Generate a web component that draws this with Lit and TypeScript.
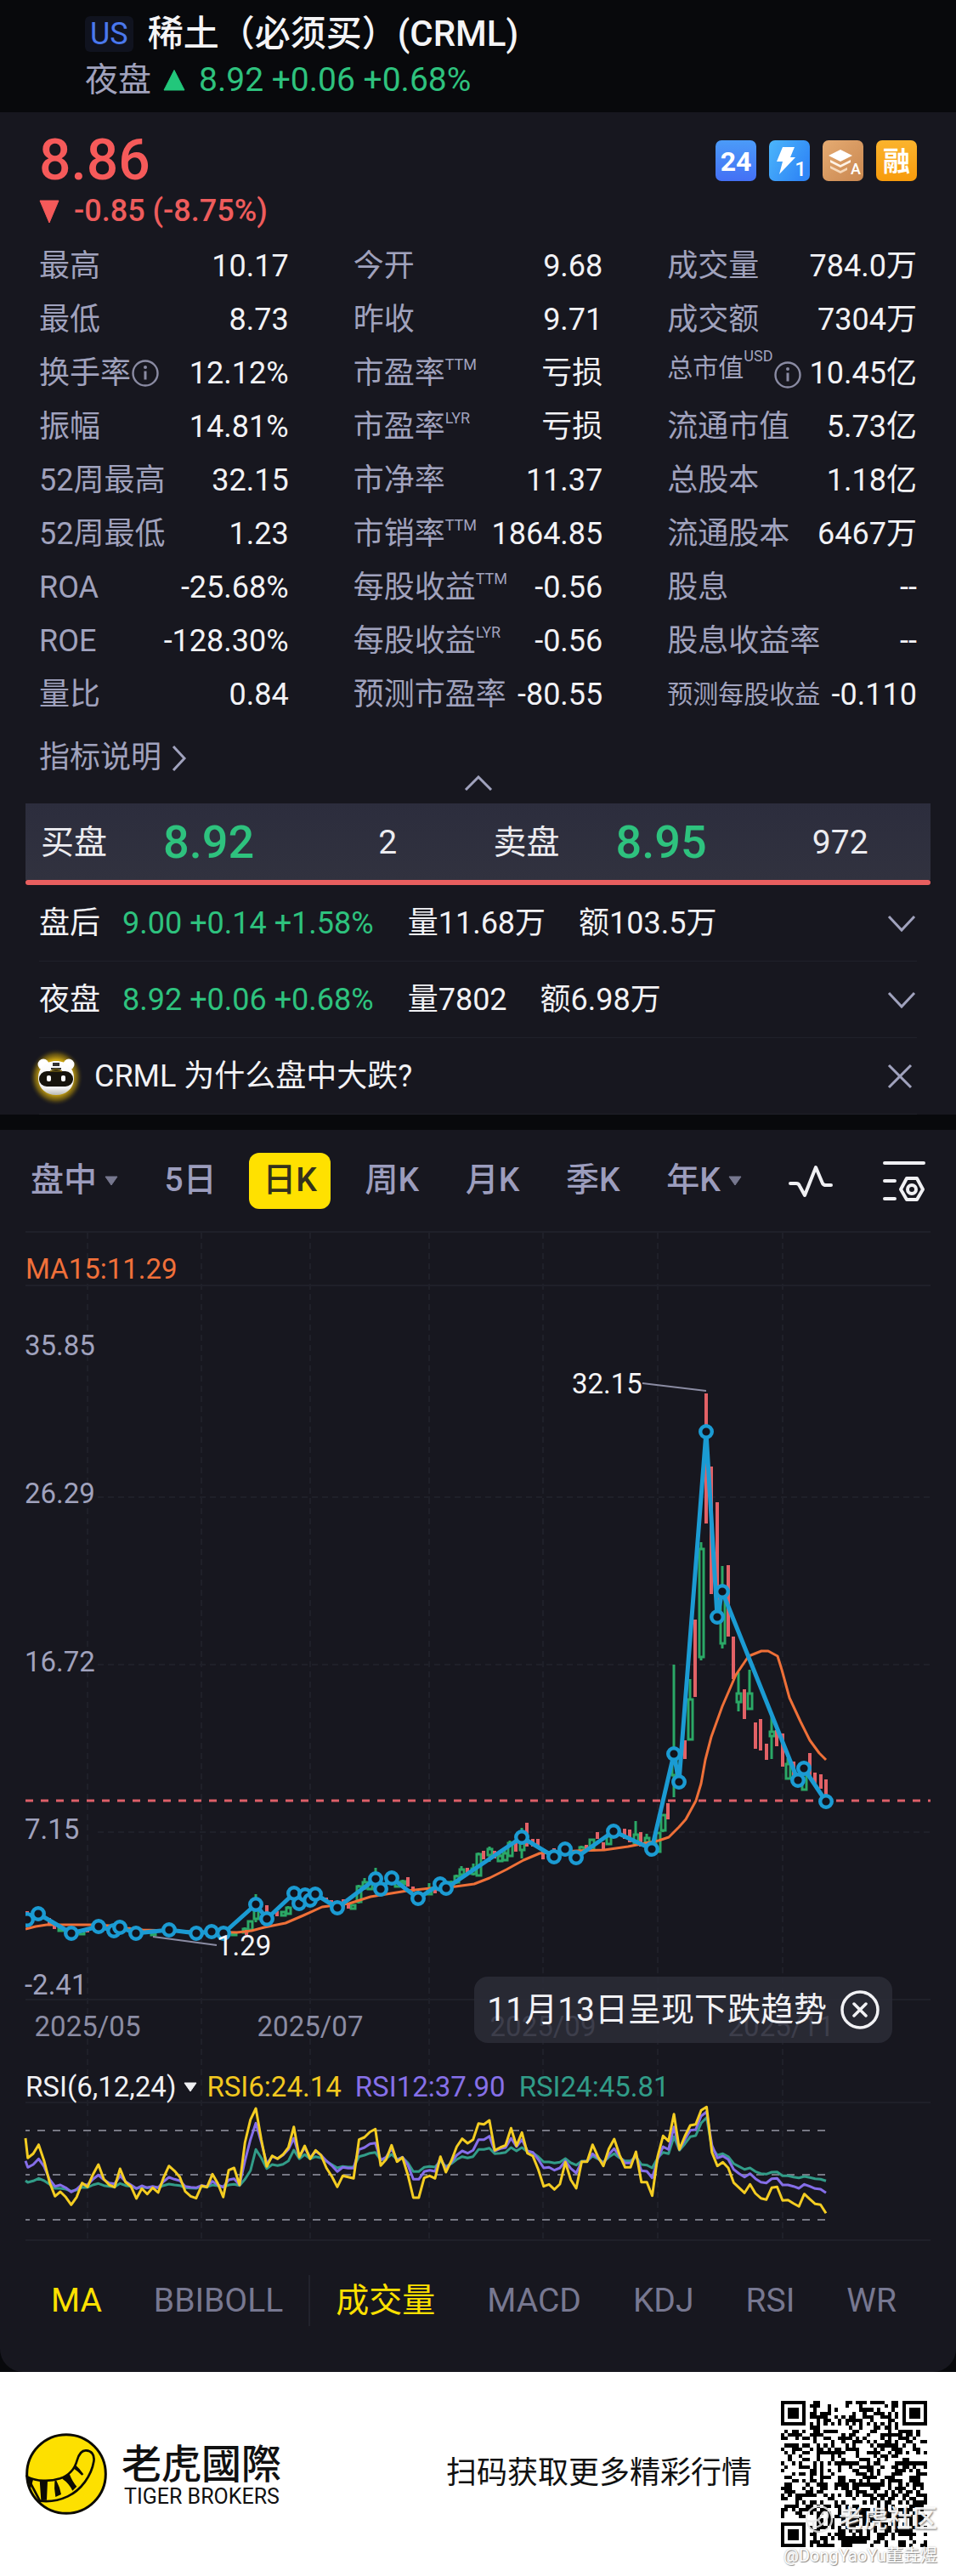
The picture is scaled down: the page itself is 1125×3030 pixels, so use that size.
import { LitElement, html, svg, css, nothing } from "lit";
import { customElement } from "lit/decorators.js";
import { classMap } from "lit/directives/class-map.js";

interface Stat {
  label: string;
  value: string;
  sup?: string;
  info?: boolean;
  small?: boolean;
}

const STATS: Stat[][] = [
  [
    { label: "最高", value: "10.17" },
    { label: "最低", value: "8.73" },
    { label: "换手率", value: "12.12%", info: true },
    { label: "振幅", value: "14.81%" },
    { label: "52周最高", value: "32.15" },
    { label: "52周最低", value: "1.23" },
    { label: "ROA", value: "-25.68%" },
    { label: "ROE", value: "-128.30%" },
    { label: "量比", value: "0.84" },
  ],
  [
    { label: "今开", value: "9.68" },
    { label: "昨收", value: "9.71" },
    { label: "市盈率", sup: "TTM", value: "亏损" },
    { label: "市盈率", sup: "LYR", value: "亏损" },
    { label: "市净率", value: "11.37" },
    { label: "市销率", sup: "TTM", value: "1864.85" },
    { label: "每股收益", sup: "TTM", value: "-0.56" },
    { label: "每股收益", sup: "LYR", value: "-0.56" },
    { label: "预测市盈率", value: "-80.55" },
  ],
  [
    { label: "成交量", value: "784.0万" },
    { label: "成交额", value: "7304万" },
    { label: "总市值", sup: "USD", value: "10.45亿", info: true, small: true },
    { label: "流通市值", value: "5.73亿" },
    { label: "总股本", value: "1.18亿" },
    { label: "流通股本", value: "6467万" },
    { label: "股息", value: "--" },
    { label: "股息收益率", value: "--" },
    { label: "预测每股收益", value: "-0.110", small: true },
  ],
];

const SESSIONS = [
  { name: "盘后", quote: "9.00 +0.14 +1.58%", volume: "量11.68万", amount: "额103.5万" },
  { name: "夜盘", quote: "8.92 +0.06 +0.68%", volume: "量7802", amount: "额6.98万" },
];

const PERIODS = [
  { label: "盘中", menu: true },
  { label: "5日" },
  { label: "日K", active: true },
  { label: "周K" },
  { label: "月K" },
  { label: "季K" },
  { label: "年K", menu: true },
];

type Point = [number, number];

const GRID_X = [103, 237, 365, 505, 639, 774, 921];
const GRID_Y = [1761, 1958, 2155];

const MA15: Point[] = [
  [30, 2269], [42, 2266], [55, 2264], [107, 2264], [130, 2265], [150, 2268], [168, 2270], [200, 2271], [229, 2272],
  [279, 2273], [296, 2271], [311, 2267], [336, 2262], [357, 2253], [379, 2243], [411, 2239], [436, 2231],
  [479, 2224], [507, 2221], [536, 2219], [558, 2216], [576, 2209], [596, 2199], [616, 2188], [635, 2180],
  [659, 2178], [679, 2177], [711, 2176], [739, 2172], [775, 2165], [787, 2161], [799, 2149], [807, 2140],
  [819, 2118], [825, 2098], [830, 2070], [837, 2043], [850, 2007], [866, 1970], [881, 1948], [896, 1942],
  [904, 1942], [915, 1948], [920, 1964], [929, 1997], [942, 2025], [953, 2047], [964, 2062], [972, 2070],
];

const TREND: Point[] = [
  [32, 2258], [45, 2251], [84, 2274], [116, 2266], [134, 2271], [141, 2267], [160, 2274], [199, 2270],
  [231, 2274], [249, 2272], [263, 2274], [301, 2240], [314, 2257], [346, 2227], [352, 2239], [359, 2229],
  [365, 2235], [371, 2228], [397, 2244], [442, 2210], [448, 2222], [461, 2209], [492, 2233], [518, 2216],
  [525, 2221], [614, 2161], [652, 2184], [665, 2175], [678, 2185], [722, 2154], [767, 2175], [793, 2063],
  [799, 2096], [831, 1684], [844, 1902], [850, 1872], [939, 2094], [946, 2080], [972, 2119],
];

/* x, high, low */
const FALLS: [number, number, number][] = [
  [32, 2248, 2262], [58, 2256, 2264], [64, 2263, 2269], [103, 2268, 2273], [290, 2270, 2276], [314, 2241, 2252],
  [326, 2248, 2254], [384, 2232, 2238], [390, 2235, 2240], [404, 2234, 2243], [410, 2240, 2245], [480, 2208, 2219],
  [486, 2219, 2225], [512, 2221, 2227], [550, 2197, 2203], [569, 2177, 2187], [582, 2177, 2186],
  [607, 2168, 2178], [620, 2144, 2172], [627, 2163, 2172], [633, 2163, 2173], [639, 2176, 2187],
  [652, 2174, 2180], [690, 2170, 2178], [703, 2155, 2163], [710, 2167, 2175], [735, 2151, 2163],
  [741, 2152, 2167], [754, 2155, 2172], [786, 2121, 2140], [806, 2047, 2069], [818, 1905, 1996],
  [831, 1639, 1792], [837, 1725, 1875], [844, 1767, 1892], [857, 1841, 1925], [863, 1925, 1975],
  [876, 1987, 2022], [889, 2026, 2057], [895, 2022, 2059], [902, 2051, 2070], [914, 2035, 2054],
  [921, 2039, 2078], [934, 2072, 2090], [953, 2062, 2090], [959, 2085, 2098], [966, 2087, 2104],
  [972, 2093, 2112],
];

/* x, high, body top, body bottom, low */
const RISES: [number, number, number, number, number][] = [
  [71, 2267, 2268, 2271, 2272], [96, 2270, 2271, 2275, 2275], [180, 2272, 2274, 2276, 2277],
  [275, 2273, 2274, 2276, 2277], [288, 2267, 2269, 2273, 2274], [294, 2259, 2260, 2270, 2271],
  [301, 2228, 2246, 2257, 2261], [333, 2248, 2249, 2253, 2254], [339, 2242, 2244, 2251, 2252],
  [415, 2240, 2241, 2245, 2246], [422, 2217, 2219, 2237, 2239], [429, 2209, 2214, 2221, 2223],
  [435, 2212, 2215, 2222, 2222], [442, 2197, 2204, 2212, 2214], [467, 2212, 2214, 2219, 2220],
  [474, 2211, 2213, 2216, 2217], [505, 2215, 2222, 2228, 2229], [531, 2212, 2214, 2219, 2220],
  [537, 2205, 2207, 2214, 2216], [543, 2195, 2199, 2205, 2208], [557, 2192, 2198, 2204, 2206],
  [563, 2179, 2181, 2206, 2207], [576, 2172, 2175, 2182, 2190], [588, 2180, 2183, 2189, 2190],
  [594, 2176, 2180, 2188, 2189], [600, 2165, 2168, 2183, 2184], [614, 2150, 2168, 2176, 2186],
  [684, 2171, 2173, 2177, 2178], [696, 2163, 2164, 2176, 2177], [716, 2158, 2160, 2169, 2170],
  [748, 2142, 2158, 2168, 2170], [761, 2157, 2162, 2167, 2168], [774, 2155, 2156, 2178, 2179],
  [780, 2134, 2135, 2153, 2155], [793, 1958, 2063, 2088, 2114], [812, 1975, 1999, 2046, 2047],
  [825, 1814, 1822, 1949, 1953], [850, 1842, 1872, 1933, 1939], [869, 1967, 1992, 2002, 2013],
  [882, 1964, 1992, 2010, 2011], [908, 2015, 2037, 2042, 2069], [927, 2068, 2075, 2092, 2093],
  [946, 2084, 2087, 2105, 2106],
];

/* One sample per trading day, in thirds of a unit below the oscillator's top. */
const RSI6 = [
  355, 340, 308, 365, 440, 490, 474, 493, 520, 493, 443, 457, 413, 378, 430, 450, 458, 393, 440, 455, 498, 463, 482,
  460, 477, 425, 383, 400, 422, 473, 490, 497, 453, 458, 412, 445, 493, 398, 390, 450, 300, 220, 180, 290, 385, 347,
  358, 343, 318, 245, 352, 312, 358, 328, 345, 390, 420, 457, 418, 422, 427, 290, 282, 263, 253, 382, 360, 310, 368,
  353, 415, 495, 495, 425, 418, 427, 350, 405, 365, 315, 287, 303, 290, 233, 236, 222, 328, 318, 310, 250, 312, 265,
  338, 348, 395, 455, 448, 466, 447, 370, 432, 462, 368, 368, 308, 350, 383, 323, 288, 345, 388, 388, 333, 440, 440,
  488, 350, 277, 295, 200, 325, 278, 240, 236, 187, 175, 335, 383, 370, 390, 442, 460, 478, 448, 480, 497, 502, 460,
  457, 505, 503, 515, 526, 482, 500, 517, 520, 550,
];
const RSI12 = [
  388, 378, 358, 385, 430, 455, 450, 460, 475, 465, 447, 450, 430, 415, 432, 443, 446, 418, 438, 450, 463, 453, 460,
  455, 460, 438, 423, 430, 435, 455, 458, 460, 452, 455, 437, 450, 458, 432, 428, 450, 365, 290, 232, 300, 375, 350,
  357, 345, 325, 285, 350, 318, 355, 330, 345, 365, 382, 403, 388, 391, 391, 325, 318, 305, 302, 362, 352, 322, 362,
  352, 380, 430, 430, 403, 398, 402, 355, 393, 370, 345, 330, 338, 328, 290, 290, 278, 330, 322, 318, 285, 315, 290,
  330, 335, 360, 390, 388, 398, 390, 365, 392, 408, 368, 366, 340, 355, 375, 343, 322, 350, 373, 373, 345, 400, 402,
  425, 360, 315, 325, 245, 325, 290, 257, 255, 207, 192, 310, 355, 348, 360, 395, 410, 422, 410, 428, 440, 443, 428,
  427, 450, 450, 455, 462, 448, 455, 463, 465, 478,
];
const RSI24 = [
  441, 436, 427, 435, 448, 462, 462, 465, 472, 468, 458, 459, 450, 445, 452, 455, 457, 445, 452, 455, 462, 458, 460,
  458, 460, 452, 447, 450, 452, 460, 461, 462, 455, 457, 450, 453, 457, 450, 448, 452, 430, 400, 325, 355, 392, 378,
  382, 377, 365, 327, 358, 343, 358, 350, 355, 367, 378, 390, 385, 387, 387, 350, 345, 338, 335, 362, 357, 342, 360,
  353, 372, 403, 403, 388, 385, 387, 365, 385, 375, 360, 350, 355, 350, 325, 325, 320, 340, 338, 335, 318, 330, 318,
  332, 337, 350, 369, 369, 373, 370, 357, 372, 380, 366, 366, 348, 358, 370, 352, 340, 355, 365, 365, 350, 378, 380,
  390, 355, 335, 340, 280, 328, 305, 280, 276, 232, 212, 320, 345, 340, 350, 375, 385, 395, 390, 403, 410, 412, 405,
  404, 418, 418, 422, 425, 420, 424, 428, 430, 436,
];

const poly = (pts: Point[]) => pts.map((p) => p.join(",")).join(" ");
const oscillator = (lead: number, samples: number[]) =>
  poly([
    [30, 2420 + lead / 3],
    ...samples.map((s, i): Point => [+(32.7 + 6.39 * i).toFixed(1), +(2420 + s / 3).toFixed(1)]),
  ]);

/* Dark modules of a 41 x 41 code as one path. */
function codePath(): string {
  const n = 41;
  const ring = (r: number, c: number, top: number, left: number, size: number) => {
    const y = r - top;
    const x = c - left;
    if (y < 0 || x < 0 || y >= size || x >= size) return undefined;
    const d = Math.min(y, x, size - 1 - y, size - 1 - x);
    return d !== 1;
  };
  let seed = 20251113;
  let d = "";
  for (let r = 0; r < n; r++) {
    for (let c = 0; c < n; c++) {
      seed = (Math.imul(seed, 1664525) + 1013904223) >>> 0;
      let dark = ((seed >>> 16) & 255) < 128;
      if ((r < 8 && (c < 8 || c > n - 9)) || (r > n - 9 && c < 8)) dark = false;
      else if (r === 6 || c === 6) dark = (r + c) % 2 === 0;
      dark =
        ring(r, c, 0, 0, 7) ?? ring(r, c, 0, n - 7, 7) ?? ring(r, c, n - 7, 0, 7) ?? ring(r, c, 32, 32, 5) ?? dark;
      if (dark) d += `M${c} ${r}h1v1h-1z`;
    }
  }
  return d;
}

const infoIcon = svg`<circle cx="17" cy="17" r="14.5" fill="none" stroke="#8a8ba3" stroke-width="2.4"/>
  <path d="M17 14.5v10" stroke="#8a8ba3" stroke-width="3"/><circle cx="17" cy="10" r="2" fill="#8a8ba3"/>`;

@customElement("quote-header")
export class QuoteHeader extends LitElement {
  static styles = css`
    :host { display: block; background: #08090c; padding: 16px 46px 8px 100px; }
    .row { display: flex; align-items: center; height: 48px; }
    .row + .row { height: 60px; }
    .market { background: #10131f; color: #4a78ee; font-size: 36px; line-height: 42px; padding: 0 6px; border-radius: 6px; }
    .name { margin: 0 0 0 17px; font-size: 42px; line-height: 48px; font-weight: 500; color: #f4f4f6; white-space: nowrap; }
    .session { font-size: 39px; color: #a0a2bd; }
    .up { width: 26px; height: 26px; margin: 0 16px 0 14px; }
    .quote { font-size: 39px; color: #2ec27e; }
  `;
  render() {
    return html`
      <div class="row">
        <span class="market">US</span>
        <h1 class="name">稀土（必须买）(CRML)</h1>
      </div>
      <div class="row">
        <span class="session">夜盘</span>
        <svg class="up" viewBox="0 0 26 26"><path d="M13 1.5 25 25H1z" fill="#22c77b" stroke="#22c77b" stroke-linejoin="round"/></svg>
        <span class="quote">8.92 +0.06 +0.68%</span>
      </div>
    `;
  }
}

@customElement("quote-stats")
export class QuoteStats extends LitElement {
  static styles = css`
    :host { display: block; padding: 24px 46px 15px; }
    .top { display: flex; align-items: center; justify-content: space-between; height: 66px; }
    .price { font-size: 66px; line-height: 66px; font-weight: 500; color: #f65a5a; }
    .badges { display: flex; gap: 15px; }
    .badge { width: 48px; height: 48px; display: block; }
    .change { display: flex; align-items: center; gap: 17px; height: 54px; font-size: 36px; font-weight: 500; color: #ee5c5c; }
    .down { width: 24px; height: 28px; }
    .grid { display: grid; grid-template-columns: repeat(3, 1fr); column-gap: 76px; margin-top: 5px; }
    .list { margin: 0; }
    .stat { display: flex; align-items: center; justify-content: space-between; height: 63px; font-size: 36px; line-height: 42px; white-space: nowrap; }
    .label { display: flex; align-items: center; color: #a0a2bd; }
    .small { font-size: 30px; }
    .sup { align-self: flex-start; font-size: 18px; line-height: 22px; }
    .small .sup { margin-top: -4px; }
    .raised { padding-bottom: 12px; }
    .info { width: 34px; height: 34px; }
    .raised .info { margin: 8px 3px -8px 0; }
    .value { margin: 0; color: #f2f2f5; }
    .explain { display: inline-flex; align-items: center; gap: 12px; margin-top: 21px; height: 46px; color: #a0a2bd; font-size: 36px; text-decoration: none; }
    .arrow { width: 18px; height: 32px; }
    .fold { display: block; margin: -3px auto 0; padding: 0; width: 34px; height: 18px; border: 0; background: none; }
    .fold svg { display: block; width: 34px; height: 18px; }
  `;
  private stat(s: Stat) {
    const raised = !!(s.small && s.info);
    return html`<div class="stat">
      <dt class=${classMap({ label: true, small: !!s.small, raised })}>
        ${s.label}${s.sup ? html`<span class="sup">${s.sup}</span>` : nothing}${s.info
          ? html`<svg class="info" viewBox="0 0 34 34">${infoIcon}</svg>`
          : nothing}
      </dt>
      <dd class="value">${s.value}</dd>
    </div>`;
  }
  render() {
    return html`
      <div class="top">
        <span class="price">8.86</span>
        <div class="badges">
          <svg class="badge" viewBox="0 0 48 48" font-family="Roboto, sans-serif">
            <defs><linearGradient id="a" x1="0" y1="0" x2="0" y2="1"><stop stop-color="#4b9bf8"/><stop offset="1" stop-color="#4470f5"/></linearGradient></defs>
            <rect width="48" height="48" rx="7" fill="url(#a)"/>
            <text x="24" y="36" text-anchor="middle" font-size="32" font-weight="700" fill="#fff">24</text>
          </svg>
          <svg class="badge" viewBox="0 0 48 48" font-family="Roboto, sans-serif">
            <defs><linearGradient id="b" x1="0" y1="0" x2="1" y2=".6"><stop stop-color="#4cb6fb"/><stop offset="1" stop-color="#2f86f6"/></linearGradient></defs>
            <rect width="48" height="48" rx="7" fill="url(#b)"/>
            <path d="M16 8h14l-5 12h6L12 40l4-15H9z" fill="#fff"/>
            <text x="37" y="42" text-anchor="middle" font-size="24" font-weight="500" fill="#fff">1</text>
          </svg>
          <svg class="badge" viewBox="0 0 48 48" font-family="Roboto, sans-serif">
            <defs><linearGradient id="c" x1="0" y1="0" x2="1" y2="1"><stop stop-color="#e5ab72"/><stop offset="1" stop-color="#c98750"/></linearGradient></defs>
            <rect width="48" height="48" rx="7" fill="url(#c)"/>
            <path d="M21 11 35 18 21 25 7 18z" fill="#fff"/>
            <path d="M9 23l12 6 12-6v3l-12 6-12-6z" fill="#fff3e6"/>
            <path d="M9 30l12 6 8-4v3l-8 4-12-6z" fill="#f6d9bb"/>
            <text x="39" y="40" text-anchor="middle" font-size="18" font-weight="500" fill="#fff">A</text>
          </svg>
          <svg class="badge" viewBox="0 0 48 48" font-family="'Noto Sans CJK SC', sans-serif">
            <defs><linearGradient id="d" x1="0" y1="0" x2="0" y2="1"><stop stop-color="#fbb32d"/><stop offset="1" stop-color="#f79b0c"/></linearGradient></defs>
            <rect width="48" height="48" rx="7" fill="url(#d)"/>
            <text x="24" y="36" text-anchor="middle" font-size="32" font-weight="700" fill="#fff">融</text>
          </svg>
        </div>
      </div>
      <div class="change">
        <svg class="down" viewBox="0 0 24 28"><path d="M1 1h22L12 27z" fill="#f65a5a" stroke="#f65a5a" stroke-linejoin="round"/></svg>
        <span>-0.85 (-8.75%)</span>
      </div>
      <div class="grid">${STATS.map((col) => html`<dl class="list">${col.map((s) => this.stat(s))}</dl>`)}</div>
      <a class="explain" href="#">指标说明
        <svg class="arrow" viewBox="0 0 18 32" fill="none" stroke="#a0a2bd" stroke-width="3"><path d="M2 2l13 14L2 30"/></svg>
      </a>
      <button class="fold" type="button" aria-label="收起">
        <svg viewBox="0 0 34 18" fill="none" stroke="#a0a2bd" stroke-width="3"><path d="M2 17 17 2l15 15"/></svg>
      </button>
    `;
  }
}

@customElement("order-book")
export class OrderBook extends LitElement {
  static styles = css`
    :host { display: block; padding: 0 30px; }
    .bar { display: grid; grid-template-columns: 1fr 1fr; height: 90px; background: linear-gradient(#2c2d3d, #31323f); }
    .side { display: grid; grid-template-columns: 144px 158px 1fr; align-items: center; padding: 3px 0 0 18px; font-size: 39px; color: #ececf0; }
    .price { font-size: 54px; font-weight: 500; color: #2ec27e; }
    .size { text-align: center; }
    .ratio { height: 6px; border-radius: 3px; background: #e85f5f; }
    .rows { padding: 0 16px; }
    .row { display: flex; align-items: center; box-sizing: border-box; height: 90px; padding-top: 2px; border-bottom: 1px solid #20212a; font-size: 36px; color: #f2f2f5; white-space: nowrap; }
    .quote { margin: 0 40px 0 26px; color: #2ec27e; }
    .amount { margin-left: 39px; }
    .icon { margin-left: auto; padding: 0; border: 0; background: none; width: 36px; height: 36px; }
    .icon svg { display: block; width: 36px; height: 36px; }
    .mascot { width: 64px; height: 68px; margin: 0 13px 0 -12px; }
    .last .icon { margin-right: 2px; }
  `;
  private side(name: string, price: string, size: string) {
    return html`<div class="side"><span>${name}</span><span class="price">${price}</span><span class="size">${size}</span></div>`;
  }
  render() {
    return html`
      <div class="bar">${this.side("买盘", "8.92", "2")}${this.side("卖盘", "8.95", "972")}</div>
      <div class="ratio"></div>
      <div class="rows">
        ${SESSIONS.map(
          (s) => html`<div class="row">
            <span>${s.name}</span><span class="quote">${s.quote}</span><span>${s.volume}</span><span class="amount">${s.amount}</span>
            <button class="icon" type="button" aria-label="展开${s.name}">
              <svg viewBox="0 0 36 36" fill="none" stroke="#a0a2bd" stroke-width="3"><path d="M3 9l15 16L33 9"/></svg>
            </button>
          </div>`,
        )}
        <div class="row last">
          <svg class="mascot" viewBox="0 0 64 68">
            <defs>
              <radialGradient id="g"><stop offset=".6" stop-color="#c9a312"/><stop offset=".8" stop-color="#6b5812" stop-opacity=".85"/><stop offset="1" stop-color="#17171f" stop-opacity="0"/></radialGradient>
              <linearGradient id="w" x1="0" y1="0" x2="0" y2="1"><stop stop-color="#fff"/><stop offset=".8" stop-color="#f1f1f1"/><stop offset="1" stop-color="#b9b9b4"/></linearGradient>
            </defs>
            <ellipse cx="32" cy="34" rx="32" ry="34" fill="url(#g)"/>
            <circle cx="17" cy="19" r="6.5" fill="#fff"/><circle cx="47" cy="19" r="6.5" fill="#fff"/>
            <path d="M32 15c13 0 21 9 21 20 0 12-9 20-21 20s-21-8-21-20c0-11 8-20 21-20z" fill="url(#w)"/>
            <path d="M28 17h8v4h-8zM26 23h12v2H26z" fill="#333"/>
            <rect x="12" y="27" width="40" height="18" rx="9" fill="#17140c"/>
            <path d="M25 27q7-5 14 0z" fill="#17140c" stroke="#8b7312"/>
            <rect x="21" y="32" width="5" height="7" rx="2" fill="#fff"/><rect x="38" y="32" width="5" height="7" rx="2" fill="#fff"/>
          </svg>
          <span>CRML 为什么盘中大跌?</span>
          <button class="icon" type="button" aria-label="关闭">
            <svg viewBox="0 0 36 36" fill="none" stroke="#a0a2bd" stroke-width="3"><path d="M5 4l26 26M31 4 5 30"/></svg>
          </button>
        </div>
      </div>
    `;
  }
}

@customElement("quote-chart")
export class QuoteChart extends LitElement {
  static styles = css`
    :host { display: block; }
    button { font-family: inherit; line-height: inherit; border: 0; background: none; padding: 0; }
    .periods { display: flex; align-items: center; justify-content: space-between; height: 119px; padding: 0 35px 0 36px; }
    .period { display: flex; align-items: center; gap: 9px; height: 66px; font-size: 39px; font-weight: 500; color: #9c9dbd; }
    .period.active { background: #ffe100; color: #33311c; border-radius: 12px; padding: 0 16px; margin: 0 -14px 0 -16px; }
    .caret { width: 16px; height: 12px; }
    .tool svg { display: block; width: 54px; height: 54px; }
    .plot { position: relative; margin: 0; }
    .canvas { display: block; width: 100%; height: auto; }
    .axis { font-size: 33px; fill: #a0a2bd; }
    .date { font-size: 33px; fill: #8b8ca3; text-anchor: middle; }
    .mark { font-size: 33px; fill: #f4f4f6; }
    .ma { font-size: 33px; fill: #f0703a; }
    .grid { stroke: #1f2029; stroke-width: 2; }
    .dashed { stroke-dasharray: 7 5; }
    .up { fill: none; stroke: #2ba866; stroke-width: 3; }
    .fall { stroke: #e26166; stroke-width: 4; }
    .line { fill: none; stroke-linejoin: round; }
    .legend { position: absolute; left: 30px; top: 83%; height: 42px; display: flex; align-items: center; font-size: 33px; white-space: nowrap; }
    .indicator { display: flex; align-items: center; gap: 9px; margin-right: 11px; font-size: 33px; color: #f0f0f3; }
    .r6 { color: #f2c81f; margin-right: 16px; }
    .r12 { color: #8670e8; margin-right: 16px; }
    .r24 { color: #319c88; }
    .toast { position: absolute; right: 75px; bottom: 233px; height: 78px; display: flex; align-items: center; gap: 16px; padding: 0 15px; border-radius: 16px; background: rgba(44, 45, 56, 0.82); font-size: 39px; color: #f2f2f5; white-space: nowrap; }
    .toast svg { display: block; width: 46px; height: 46px; }
    .tabs { display: flex; align-items: center; justify-content: space-between; height: 154px; padding: 0 70px 14px 60px; box-sizing: border-box; }
    .tab { font-size: 39px; color: #777891; }
    .tab.on { color: #ffe100; }
    .rule { width: 2px; height: 60px; margin: 0 -31px; background: #22232d; }
  `;
  private tab(label: string, on = false) {
    return html`<button type="button" class=${classMap({ tab: true, on })}>${label}</button>`;
  }
  render() {
    return html`
      <nav class="periods">
        ${PERIODS.map(
          (p) => html`<button type="button" class=${classMap({ period: true, active: !!p.active })}>
            ${p.label}${p.menu
              ? html`<svg class="caret" viewBox="0 0 16 12"><path d="M1 1h14L8 11z" fill="#77788f" stroke="#77788f" stroke-linejoin="round"/></svg>`
              : nothing}
          </button>`,
        )}
        <button class="tool" type="button" aria-label="趋势">
          <svg viewBox="0 0 54 54" fill="none" stroke="#f0f0f3" stroke-width="4" stroke-linecap="round" stroke-linejoin="round"><path d="M3 30h7q3 0 4 3l6 11 13-33 8 19q1 2 4 2h6"/></svg>
        </button>
        <button class="tool" type="button" aria-label="设置">
          <svg viewBox="0 0 54 54" fill="none" stroke="#f0f0f3" stroke-width="4" stroke-linecap="round" stroke-linejoin="round"><path d="M5 6h46M5 27h12M5 48h12M31 24h12l7 13-7 12H31l-7-12z"/><circle cx="37" cy="37" r="5"/></svg>
        </button>
      </nav>
      <figure class="plot">
        <svg class="canvas" viewBox="0 1448 1125 1188" font-family="Roboto, 'Noto Sans CJK SC', sans-serif">
          <defs><clipPath id="area"><rect x="30" y="1448" width="1065" height="1188"/></clipPath></defs>
          ${[1449, 1512, 2352, 2473, 2635].map((y) => svg`<path class="grid" d="M30 ${y}H1095"/>`)}
          ${GRID_X.map((x) => svg`<path class="grid dashed" d="M${x} 1450V2635"/>`)}
          ${GRID_Y.map((y) => svg`<path class="grid dashed" d="M115 ${y}H1095"/>`)}
          <text class="ma" x="30" y="1504">MA15:11.29</text>
          <text class="axis" x="29" y="1594">35.85</text>
          <text class="axis" x="29" y="1768">26.29</text>
          <text class="axis" x="29" y="1966">16.72</text>
          <text class="axis" x="29" y="2163">7.15</text>
          <text class="axis" x="29" y="2346">-2.41</text>
          <text class="date" x="103" y="2395">2025/05</text>
          <text class="date" x="365" y="2395">2025/07</text>
          <text class="date" x="639" y="2395">2025/09</text>
          <text class="date" x="919" y="2395">2025/11</text>
          <path d="M30 2118H1095" stroke="#dd5f68" stroke-width="3" stroke-dasharray="9 9"/>
          <g clip-path="url(#area)">
            ${RISES.map(
              ([x, high, top, bottom, low]) =>
                svg`<path class="up" d="M${x} ${high}V${top}M${x} ${bottom}V${low}M${x - 2} ${top}h5V${bottom}h-5z"/>`,
            )}
            ${FALLS.map(([x, high, low]) => svg`<path class="fall" d="M${x} ${high}V${low}"/>`)}
            <polyline class="line" stroke="#ef7038" stroke-width="3" points=${poly(MA15)}/>
            <polyline class="line" stroke="#1b9bd3" stroke-width="5" points=${poly(TREND)}/>
            <g fill="#12131c" stroke="#1b9bd3" stroke-width="4.4">
              ${TREND.map(([x, y]) => svg`<circle cx=${x} cy=${y} r="6.8"/>`)}
            </g>
          </g>
          <path d="M756 1627 831 1636M180 2278l75 10" stroke="#8b8ca3" stroke-width="2" fill="none"/>
          <text class="mark" x="673" y="1639">32.15</text>
          <text class="mark" x="255" y="2300">1.29</text>
          ${[2506, 2558, 2611].map(
            (y) => svg`<path d="M30 ${y}H972" stroke="#777884" stroke-width="2" stroke-dasharray="9 9" stroke-dashoffset="4"/>`,
          )}
          <polyline class="line" stroke="#329c88" stroke-width="3" points=${oscillator(435, RSI24)}/>
          <polyline class="line" stroke="#856ee9" stroke-width="3" points=${oscillator(365, RSI12)}/>
          <polyline class="line" stroke="#f4cd22" stroke-width="3" points=${oscillator(285, RSI6)}/>
        </svg>
        <div class="legend">
          <button class="indicator" type="button">RSI(6,12,24)
            <svg class="caret" viewBox="0 0 16 12"><path d="M1 1h14L8 11z" fill="#f0f0f3" stroke="#f0f0f3" stroke-linejoin="round"/></svg>
          </button>
          <span class="r6">RSI6:24.14</span><span class="r12">RSI12:37.90</span><span class="r24">RSI24:45.81</span>
        </div>
        <div class="toast">
          <span>11月13日呈现下跌趋势</span>
          <button type="button" aria-label="关闭">
            <svg viewBox="0 0 46 46" fill="none" stroke="#f2f2f5" stroke-width="3.5" stroke-linecap="round"><circle cx="23" cy="23" r="21"/><path d="M16 16l14 14M30 16 16 30"/></svg>
          </button>
        </div>
      </figure>
      <nav class="tabs">
        ${this.tab("MA", true)}${this.tab("BBIBOLL")}<span class="rule"></span>${this.tab("成交量", true)}
        ${["MACD", "KDJ", "RSI", "WR"].map((t) => this.tab(t))}
      </nav>
    `;
  }
}

@customElement("share-footer")
export class ShareFooter extends LitElement {
  static styles = css`
    :host { display: flex; align-items: center; height: 240px; padding: 0 34px 0 30px; background: #fff; color: #111; }
    .logo { width: 96px; height: 96px; }
    .brand { display: flex; flex-direction: column; margin-left: 17px; }
    .cn { font-family: "Noto Sans CJK TC", sans-serif; font-size: 47px; line-height: 54px; font-weight: 500; }
    .en { font-size: 25px; line-height: 30px; padding-left: 3px; }
    .hint { margin-left: auto; font-size: 36px; }
    .code { position: relative; margin-left: 34px; width: 172px; }
    .qr { display: block; width: 172px; height: 172px; }
    .community { position: absolute; right: -12px; bottom: 13px; display: flex; align-items: center; gap: 6px; font-size: 29px; line-height: 40px; font-weight: 500; color: rgba(255, 255, 255, 0.88); text-shadow: 1px 1px 2px rgba(90, 90, 90, 0.8); white-space: nowrap; }
    .community svg { width: 34px; height: 34px; }
    .author { position: absolute; right: -12px; top: 168px; font-size: 20px; line-height: 28px; color: #fff; text-shadow: 1px 1px 1px #8a8a8a, 0 0 2px #aaa; white-space: nowrap; }
  `;
  render() {
    return html`
      <svg class="logo" viewBox="30 37 288 288">
        <circle cx="174" cy="181" r="139" fill="#fde000"/>
        <path d="M36 191c34 16 78 18 116 6 34-12 52-34 60-64 7-25 16-36 32-35 18 1 31 14 27 39-8 50-45 101-92 123-32 15-65 20-98 16z" fill="#fde000" stroke="#0c0b05" stroke-width="8"/>
        <path d="M36 188l22 10-11 37zM80 203l28 1-3 69-20 1zM139 204q12 22 17 49l-20 9q-6-30-3-56zM164 192l21-12q10 27 26 45l-15 15q-13-27-36-42zM198 160l8-11q14 12 29 33l-6 4q-12-13-31-26z" fill="#0c0b05"/>
        <circle cx="174" cy="181" r="139" fill="none" stroke="#0c0b05" stroke-width="9"/>
      </svg>
      <div class="brand"><span class="cn">老虎國際</span><span class="en">TIGER BROKERS</span></div>
      <span class="hint">扫码获取更多精彩行情</span>
      <div class="code">
        <svg class="qr" viewBox="0 0 41 41" shape-rendering="crispEdges"><path d=${codePath()} fill="#000"/></svg>
        <span class="community">
          <svg viewBox="0 0 34 34" fill="none" stroke="#e8e8e8" stroke-width="2.5" opacity=".85"><circle cx="17" cy="17" r="15"/><path d="M3 19c9 2 15-1 17-7 2-5 8-4 7 2-2 7-9 13-18 13M10 20v7M16 18l3 6"/></svg>
          老虎社区</span>
        <span class="author">@DongYaoYu董垚煜</span>
      </div>
    `;
  }
}

@customElement("app-root")
export class AppRoot extends LitElement {
  static styles = css`
    :host { display: block; background: #08090c; font-family: Roboto, "Noto Sans CJK SC", sans-serif; line-height: 1.2; }
    .panel { background: #17171f; }
    .panel + .panel { margin-top: 18px; border-radius: 0 0 27px 27px; }
  `;
  render() {
    return html`
      <quote-header></quote-header>
      <main>
        <section class="panel"><quote-stats></quote-stats><order-book></order-book></section>
        <section class="panel"><quote-chart></quote-chart></section>
      </main>
      <share-footer></share-footer>
    `;
  }
}
